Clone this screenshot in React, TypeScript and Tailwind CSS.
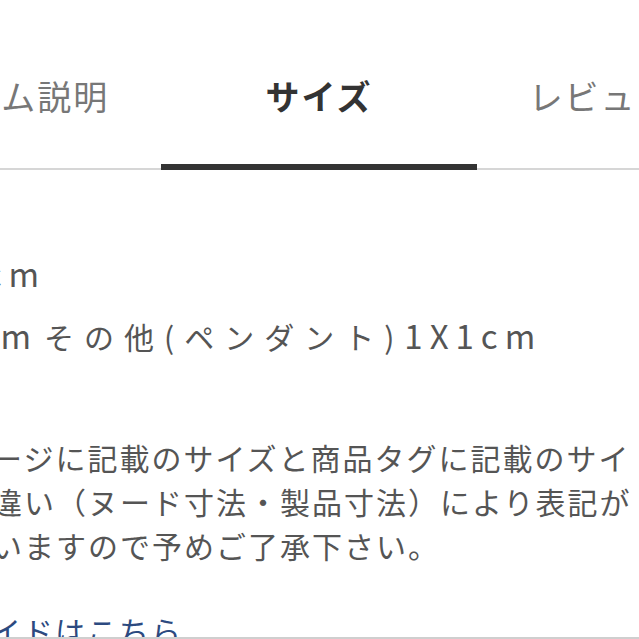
const font = "font-['Noto_Sans_CJK_JP','Noto_Sans',sans-serif]";

const tabs = [
  { label: 'アイテム説明', active: false },
  { label: 'サイズ', active: true },
  { label: 'レビュー(12)', active: false },
];

export default function App() {
  return (
    <div className={`relative h-[639px] w-[639px] overflow-hidden bg-white ${font}`}>
      <div className="-ml-[155px] flex h-[170px] w-[1100px] border-b-2 border-[#d6d6d6]">
        {tabs.map((tab) => (
          <div
            key={tab.label}
            className={`flex w-[316px] shrink-0 justify-center whitespace-nowrap pt-[79px] text-[34px] leading-none tracking-[2px] ${
              tab.active
                ? '-mb-[2px] border-b-[6px] border-[#333333] font-bold text-[#333333]'
                : 'text-[#777777]'
            }`}
          >
            {tab.label}
          </div>
        ))}
      </div>

      <div className="w-[1000px] whitespace-nowrap text-[30px] leading-[44px] text-[#555555]">
        <div className="-ml-[66px] mt-[81px] text-[33px] tracking-[7px]">40cm</div>
        <div className="-ml-[74px] mt-[18px]">
          <span className="text-[33px] tracking-[7px]">40cm</span>
          <span className="ml-[6px] tracking-[10px]">その他(ペンダント)</span>
          <span className="text-[33px] tracking-[7px]">1X1cm</span>
        </div>

        <div className="-ml-[104px] mt-[77px] tracking-[2px]">
          <div>商品ページに記載のサイズと商品タグに記載のサイ</div>
          <div>計測の違い（ヌード寸法・製品寸法）により表記が</div>
          <div>がございますので予めご了承下さい。</div>
        </div>

        <div className="-ml-[136px] mt-[41px] tracking-[2px] text-[#2c4a80]">サイズガイドはこちら</div>
      </div>

      <div className="absolute bottom-0 left-0 right-0 h-[2px] bg-[#cfcfcf]" />
    </div>
  );
}
